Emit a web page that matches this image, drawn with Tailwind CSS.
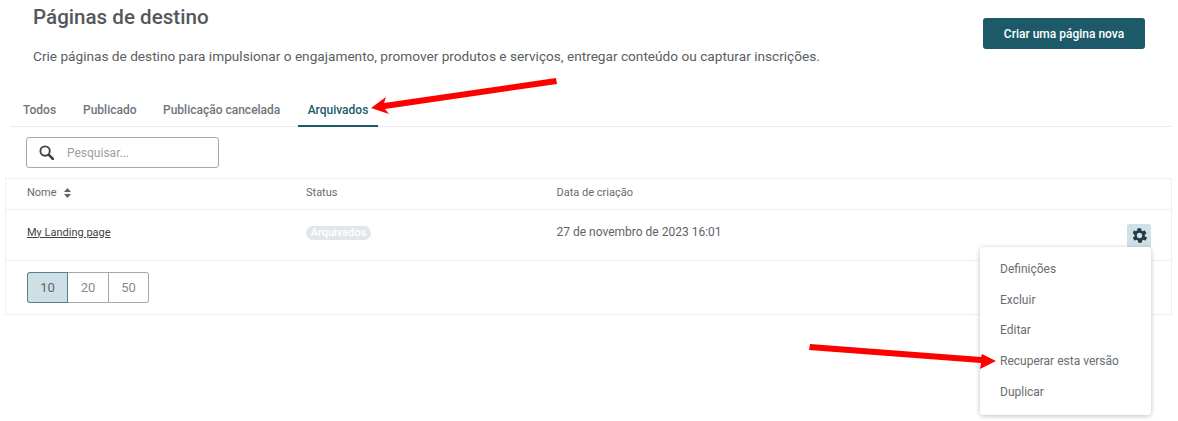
<!DOCTYPE html>
<html lang="pt">
<head>
<meta charset="utf-8">
<script src="https://cdn.jsdelivr.net/npm/@tailwindcss/browser@4"></script>
<title>Páginas de destino</title>
</head>
<body class="bg-white font-['Roboto',sans-serif] text-[#5f6368]">
<div class="relative w-[1178px] h-[421px] overflow-hidden">
  <header class="flex justify-between h-[70px] pl-[33px] pr-[33px]">
    <div>
      <h1 class="text-[20.6px] leading-[24px] mt-[5px] font-medium text-[#54585c]">Páginas de destino</h1>
      <p class="text-[13.65px] leading-[20px] mt-[17px] text-[#5a5e62]">Crie páginas de destino para impulsionar o engajamento, promover produtos e serviços, entregar conteúdo ou capturar inscrições.</p>
    </div>
    <button class="mt-[18px] w-[162px] h-[31px] rounded-[3px] bg-[#1c5a6a] text-white text-[12px] font-medium">Criar uma página nova</button>
  </header>
  <nav class="flex ml-[10px] mr-[6px] mt-[24px] h-[33px] border-b border-[#e8eaeb] text-[12px] font-medium text-[#70757a]">
    <a class="w-[73px] pl-[13px] pt-[7px]">Todos</a>
    <a class="w-[80px] pt-[7px]">Publicado</a>
    <a class="w-[135px] pt-[7px]">Publicação cancelada</a>
    <a class="w-[80px] text-center pt-[7px] h-[33px] border-b-2 border-[#1c5a6a] text-[#1c5a6a]">Arquivados</a>
  </nav>
  <div class="ml-[26px] mt-[10px] w-[193px] h-[31px] border border-[#a4a9ad] rounded-[3px] flex items-center pl-[12px] gap-[13px]">
    <svg class="w-[15px] h-[15px]" viewBox="0 0 16 16" fill="none" stroke="#3c4247" stroke-linecap="round"><circle cx="6.500" cy="6.500" r="5" stroke-width="2"/><path d="M10.500 10.500 15 15" stroke-width="2.800"/></svg>
    <span class="text-[12px] text-[#9aa0a5]">Pesquisar...</span>
  </div>
  <section class="ml-[5px] mt-[10px] w-[1167px] h-[137px] border border-[#eff0f1] text-[11px]">
    <div class="flex items-center h-[31px] pb-[2px] border-b border-[#eff0f1] text-[#666a6e]">
      <div class="w-[300px] pl-[21px] flex items-center gap-[7px]">Nome
        <svg class="w-[7px] h-[10px]" viewBox="0 0 7 10" fill="#5f6368"><path d="M3.500 0 7 4H0zM0 6h7l-3.500 4z"/></svg>
      </div>
      <div class="w-[250px]">Status</div>
      <div class="pl-[0.5px]">Data de criação</div>
    </div>
    <div class="flex items-center h-[51px] border-b border-[#eff0f1]">
      <div class="w-[300px] pl-[21px] -mt-[4px]"><a class="underline text-[#3f4347]">My Landing page</a></div>
      <div class="w-[250px] -mt-[4px]"><span class="inline-block w-[65px] h-[14px] leading-[14px] rounded-full bg-[#e3e6e8] text-white text-center font-medium">Arquivados</span></div>
      <div class="text-[12px] text-[#5f6368] -mt-[6px] pl-[0.5px]">27 de novembro de 2023 16:01</div>
      <button class="ml-auto mr-[20px] mt-[1px] w-[24px] h-[24px] rounded-[2px] bg-[#d0e0e7] flex items-center justify-center">
        <svg class="w-[17px] h-[17px]" viewBox="0 0 24 24" fill="#263a45"><path d="M19.400 13a7.600 7.600 0 0 0 0-2l2.200-1.700a.5.5 0 0 0 .1-.6l-2.100-3.600a.5.5 0 0 0-.6-.2l-2.600 1a7.600 7.600 0 0 0-1.700-1l-.4-2.700a.5.5 0 0 0-.5-.4h-4.200a.5.5 0 0 0-.5.4l-.4 2.700a7.600 7.600 0 0 0-1.700 1l-2.600-1a.5.5 0 0 0-.6.2L2.700 8.700a.5.5 0 0 0 .1.6L5 11a7.600 7.600 0 0 0 0 2l-2.200 1.700a.5.5 0 0 0-.1.6l2.100 3.600a.5.5 0 0 0 .6.2l2.600-1a7.600 7.600 0 0 0 1.700 1l.4 2.700a.5.5 0 0 0 .5.4h4.200a.5.5 0 0 0 .5-.4l.4-2.700a7.600 7.600 0 0 0 1.700-1l2.600 1a.5.5 0 0 0 .6-.2l2.100-3.600a.5.5 0 0 0-.1-.6zM12 15.800a3.800 3.800 0 1 1 0-7.600 3.800 3.800 0 0 1 0 7.600z"/></svg>
      </button>
    </div>
    <div class="flex ml-[21px] mt-[11px] w-[122px] h-[31px] text-[13px] text-[#868b8f]">
      <span class="w-[41px] flex items-center justify-center rounded-l-[3px] border border-[#1c5a6a]/70 bg-[#cfdfe6] text-[#5b6469]">10</span>
      <span class="w-[41px] flex items-center justify-center border-y border-r border-[#a4a9ad]">20</span>
      <span class="w-[40px] flex items-center justify-center rounded-r-[3px] border-y border-r border-[#a4a9ad]">50</span>
    </div>
  </section>
  <ul class="absolute left-[980px] top-[247px] w-[171px] h-[168px] bg-white rounded-[3px] shadow-[0_1px_5px_rgba(0,0,0,0.25)] pt-[6.600px] text-[12px] text-[#696d71]">
    <li class="h-[30.700px] pl-[20px] flex items-center">Definições</li>
    <li class="h-[30.700px] pl-[20px] flex items-center">Excluir</li>
    <li class="h-[30.700px] pl-[20px] flex items-center">Editar</li>
    <li class="h-[30.700px] pl-[20px] flex items-center">Recuperar esta versão</li>
    <li class="h-[30.700px] pl-[20px] flex items-center">Duplicar</li>
  </ul>
  <svg class="absolute left-0 top-0 pointer-events-none" width="1178" height="421" viewBox="0 0 1178 421" fill="#fd0000">
    <polygon points="556,78 557,84 385,109 389,114 371,108 386,97 384,103"/>
    <polygon points="810,344 809,350 981,363 980,369 996,361 982,354 981,357"/>
  </svg>
</div>
</body>
</html>
